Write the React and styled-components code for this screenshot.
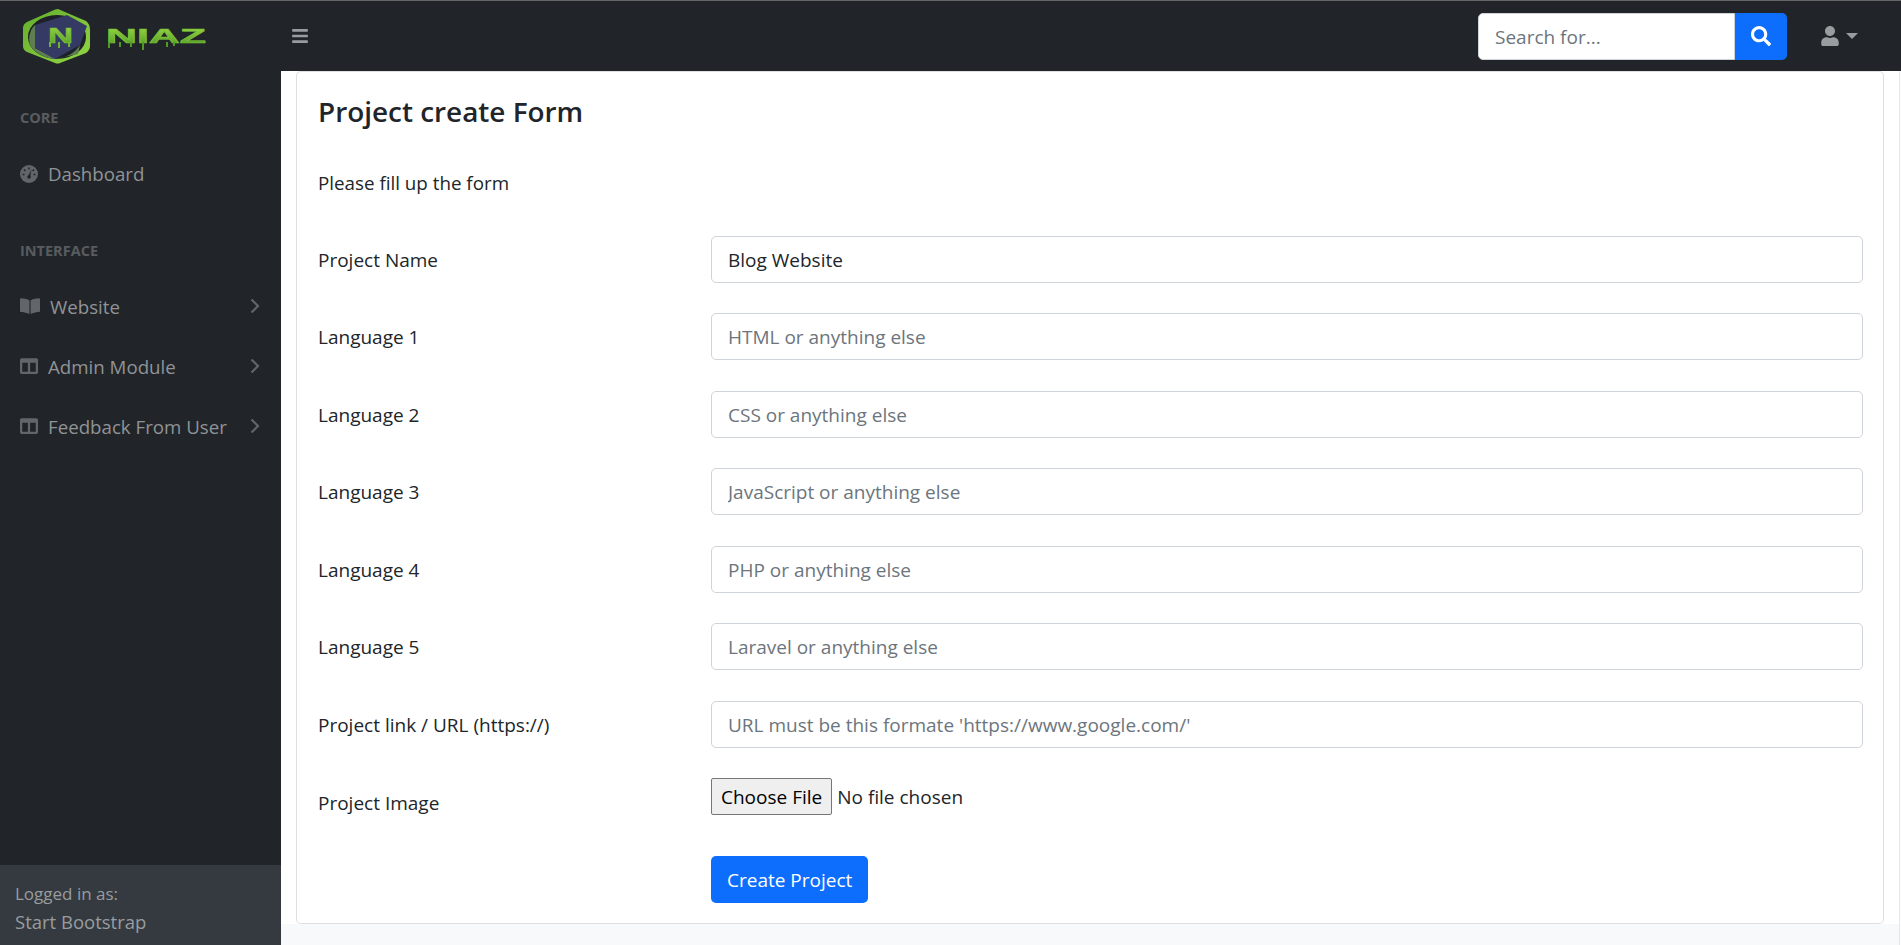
import React from 'react'
import styled, { createGlobalStyle } from 'styled-components'
import { FaBars, FaSearch, FaUser, FaBookOpen, FaColumns } from 'react-icons/fa'

const GlobalStyle = createGlobalStyle`
  * { box-sizing: border-box; }
  html, body { margin: 0; padding: 0; height: 100%; }
  body {
    font-family: "Open Sans", "Noto Sans", sans-serif;
    font-size: 19px;
    color: #212529;
    background: #fff;
    overflow: hidden;
  }
`

const fields = [
  { label: 'Project Name', value: 'Blog Website' },
  { label: 'Language 1', placeholder: 'HTML or anything else' },
  { label: 'Language 2', placeholder: 'CSS or anything else' },
  { label: 'Language 3', placeholder: 'JavaScript or anything else' },
  { label: 'Language 4', placeholder: 'PHP or anything else' },
  { label: 'Language 5', placeholder: 'Laravel or anything else' },
  { label: 'Project link / URL (https://)', placeholder: "URL must be this formate 'https://www.google.com/'" },
]

function Logo() {
  return (
    <svg width="190" height="56" viewBox="0 0 190 56">
      <defs>
        <linearGradient id="niazGreen" x1="0" y1="0" x2="0" y2="1">
          <stop offset="0" stopColor="#9edb45" />
          <stop offset="1" stopColor="#4f9a24" />
        </linearGradient>
        <linearGradient id="ringGreen" x1="0" y1="0" x2="1" y2="1">
          <stop offset="0" stopColor="#63ad2c" />
          <stop offset="1" stopColor="#93d644" />
        </linearGradient>
      </defs>
      <path d="M40 1 L68 13 Q72 16 72 22 L72 38 Q72 42 68 45 L42 55 Q40 56 37 55 L9 44 Q5 42 5 38 L5 20 Q5 16 9 14 L36 2 Q38 1 40 1 Z" fill="url(#ringGreen)" />
      <ellipse cx="39" cy="29" rx="29" ry="22" fill="#1d2127" />
      <path d="M17 17 C11 22 9 34 14 40 C20 47 30 51 38 51 L17 40 Z" fill="#5f7d52" />
      <path d="M17 17 L49 7 L69 18 L62 37 L37 51 L17 40 Z" fill="#343a63" />
      <path d="M62 37 C57 45 48 50 37 51 L60 46 Z" fill="#5f7d52" />
      <text x="30" y="35" fontFamily="Liberation Sans" fontWeight="700" fontSize="22" textLength="25" lengthAdjust="spacingAndGlyphs" fill="url(#niazGreen)" stroke="#7cc13a" strokeWidth="0.6">N</text>
      <rect x="31" y="34" width="2" height="5" fill="#6db52e" />
      <rect x="40" y="34" width="2" height="6" fill="#6db52e" />
      <rect x="50" y="34" width="2" height="5" fill="#6db52e" />
      <text x="88" y="35" fontFamily="Liberation Sans" fontWeight="700" fontSize="20" textLength="100" lengthAdjust="spacingAndGlyphs" fill="url(#niazGreen)" stroke="#7cc13a" strokeWidth="0.6">NIAZ</text>
      <rect x="90" y="34" width="2" height="6" fill="#4f9a24" />
      <rect x="101" y="34" width="2" height="5" fill="#4f9a24" />
      <rect x="112" y="34" width="2" height="5" fill="#4f9a24" />
      <rect x="124" y="34" width="2" height="8" fill="#4f9a24" />
      <rect x="148" y="34" width="2" height="5" fill="#4f9a24" />
      <rect x="155" y="34" width="2" height="4" fill="#4f9a24" />
    </svg>
  )
}

function Gauge() {
  return (
    <svg width="18" height="18" viewBox="0 0 18 18">
      <circle cx="9" cy="9" r="9" fill="currentColor" />
      <path d="M9 2.5v2M4 4.5l1.4 1.4M2.5 9.5h2M14 4.5l-1.4 1.4M15.5 9.5h-2" stroke="#212529" strokeWidth="1.4" />
      <path d="M11.5 4.5 L8.2 11 L10.2 12 Z" fill="#212529" />
      <circle cx="9" cy="12" r="1.8" fill="#212529" />
    </svg>
  )
}

function Chevron() {
  return (
    <ChevronIcon width="10" height="16" viewBox="0 0 10 16">
      <path d="M1.5 1.5 L8 8 L1.5 14.5" fill="none" stroke="currentColor" strokeWidth="2.2" />
    </ChevronIcon>
  )
}

function App() {
  return (
    <Page>
      <GlobalStyle />
      <TopBar>
        <Brand><Logo /></Brand>
        <MenuToggle><FaBars /></MenuToggle>
        <SearchGroup>
          <SearchInput placeholder="Search for..." />
          <SearchButton><FaSearch /></SearchButton>
        </SearchGroup>
        <UserMenu>
          <FaUser />
          <Caret />
        </UserMenu>
      </TopBar>
      <Body>
        <Sidebar>
          <SideNav>
            <SideHeading>CORE</SideHeading>
            <SideLink>
              <Gauge />
              <span>Dashboard</span>
            </SideLink>
            <SideHeading>INTERFACE</SideHeading>
            <SideLink>
              <BookIcon />
              <span>Website</span>
              <Chevron />
            </SideLink>
            <SideLink>
              <FaColumns />
              <span>Admin Module</span>
              <Chevron />
            </SideLink>
            <SideLink>
              <FaColumns />
              <span>Feedback From User</span>
              <Chevron />
            </SideLink>
          </SideNav>
          <SideFooter>
            <small>Logged in as:</small>
            <div>Start Bootstrap</div>
          </SideFooter>
        </Sidebar>
        <Content>
          <CardWrap>
            <Card>
              <Title>Project create Form</Title>
              <Intro>Please fill up the form</Intro>
              <Form>
                {fields.map((f) => (
                  <Row key={f.label}>
                    <Label>{f.label}</Label>
                    <TextInput defaultValue={f.value} placeholder={f.placeholder} />
                  </Row>
                ))}
                <FileFormRow>
                  <Label $low>Project Image</Label>
                  <FileRow>
                    <FileButton type="button">Choose File</FileButton>
                    <span>No file chosen</span>
                  </FileRow>
                </FileFormRow>
                <SubmitRow>
                  <span />
                  <div><SubmitButton type="button">Create Project</SubmitButton></div>
                </SubmitRow>
              </Form>
            </Card>
          </CardWrap>
        </Content>
      </Body>
    </Page>
  )
}

export default App

const Page = styled.div`
  height: 945px;
  display: flex;
  flex-direction: column;
`

const TopBar = styled.header`
  height: 71px;
  flex: none;
  background: #212529;
  border-top: 1px solid #666;
  display: flex;
  align-items: center;
  padding-right: 43px;
`

const Brand = styled.div`
  width: 281px;
  padding-left: 18px;
  display: flex;
`

const MenuToggle = styled.button`
  background: none;
  border: none;
  color: #9a9da0;
  font-size: 18px;
  padding: 0;
  display: flex;
  margin-right: auto;
  margin-left: 10px;
`

const SearchGroup = styled.div`
  display: flex;
  height: 47px;
  margin-right: 33px;
`

const SearchInput = styled.input`
  width: 257px;
  border: 1px solid #ced4da;
  border-radius: 5px 0 0 5px;
  padding: 1px 16px 0;
  font: inherit;
  outline: none;
  &::placeholder { color: #6c757d; }
`

const SearchButton = styled.button`
  width: 52px;
  background: #0d6efd;
  border: none;
  border-radius: 0 5px 5px 0;
  color: #fff;
  font-size: 20px;
  display: flex;
  align-items: center;
  justify-content: center;
`

const UserMenu = styled.div`
  display: flex;
  align-items: center;
  gap: 6px;
  color: #9a9da0;
  font-size: 20px;
`

const Caret = styled.span`
  width: 0;
  height: 0;
  border-top: 6px solid #9a9da0;
  border-left: 6px solid transparent;
  border-right: 6px solid transparent;
`

const Body = styled.div`
  flex: 1;
  display: flex;
  min-height: 0;
`

const Sidebar = styled.aside`
  width: 281px;
  flex: none;
  background: #212529;
  display: flex;
  flex-direction: column;
  color: #909396;
`

const SideNav = styled.nav`
  flex: 1;
`

const SideHeading = styled.div`
  padding: 37px 20px 15.5px;
  font-size: 14.5px;
  font-weight: 700;
  color: #585c60;
  line-height: 20px;
`

const SideLink = styled.div`
  height: 60px;
  display: flex;
  align-items: center;
  padding: 0 21px 0 20px;
  gap: 10px;
  font-size: 18.7px;
  white-space: nowrap;
  > svg:first-child { color: #626569; font-size: 18px; flex: none; }
`

const BookIcon = styled(FaBookOpen)`
  &&& { font-size: 20px; }
`

const ChevronIcon = styled.svg`
  margin-left: auto;
  flex: none;
  color: #626569;
`

const SideFooter = styled.div`
  height: 80px;
  background: #343a40;
  padding: 15px 15px;
  line-height: 28px;
  font-size: 18.5px;
  color: #999c9f;
  small { font-size: 17px; display: block; }
`

const Content = styled.main`
  flex: 1;
  margin-right: 1px;
  padding-bottom: 21px;
  background: #f8f9fa;
  border-right: 1px solid #e6e7e9;
  min-width: 0;
`

const CardWrap = styled.div`
  height: 100%;
  background: #fff;
  padding: 0 15px;
`

const Card = styled.section`
  height: 100%;
  background: #fff;
  border: 1px solid rgba(0, 0, 0, 0.125);
  border-radius: 5px;
  padding: 19px 20px 0 21px;
`

const Title = styled.h3`
  margin: 0;
  font-size: 27.9px;
  font-weight: 600;
  line-height: 40px;
`

const Intro = styled.p`
  margin: 38px 0 37.5px;
  font-size: 18.8px;
  line-height: 29px;
`

const Form = styled.form`
  display: flex;
  flex-direction: column;
  gap: 30.6px;
`

const Row = styled.div`
  display: grid;
  grid-template-columns: 393px 1fr;
  align-items: center;
`

const FileFormRow = styled(Row)`
  margin-top: -3px;
`

const SubmitRow = styled(Row)`
  margin-top: 8px;
`

const Label = styled.label`
  line-height: 29px;
  padding-top: ${(p) => (p.$low ? '13px' : '2px')};
`

const TextInput = styled.input`
  height: 47px;
  width: 100%;
  border: 1px solid #ced4da;
  border-radius: 5px;
  padding: 1px 16px 0;
  font: inherit;
  color: #212529;
  outline: none;
  &::placeholder { color: #6c757d; }
`

const FileRow = styled.div`
  display: flex;
  align-items: center;
  gap: 5px;
`

const FileButton = styled.button`
  height: 37px;
  padding: 0 9px;
  font: inherit;
  color: #000;
  background: #efefef;
  border: 1px solid #767676;
  border-radius: 2px;
`

const SubmitButton = styled.button`
  height: 47px;
  padding: 0 16px;
  font: inherit;
  color: #fff;
  background: #0d6efd;
  border: none;
  border-radius: 5px;
`
